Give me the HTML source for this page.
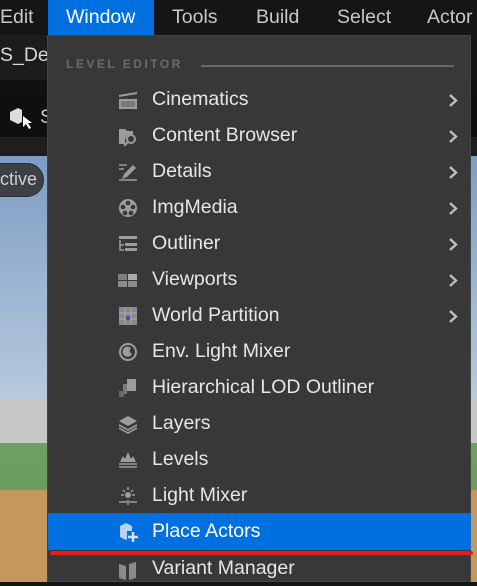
<!DOCTYPE html>
<html><head><style>
*{margin:0;padding:0;box-sizing:border-box}
body{width:477px;height:582px;overflow:hidden;position:relative;background:#151515;font-family:"Liberation Sans",sans-serif}
.abs{position:absolute}
.mb{top:0;left:0;width:477px;height:35px;background:#151515}
.mb span{position:absolute;top:6px;font-size:19.5px;color:#c8c8c8}
.menu{left:47px;top:35px;width:424px;height:547px;background:#383838;border:1px solid #454545}
.item{position:absolute;left:0;width:422px;height:36px}
.item .t{position:absolute;left:104px;top:6px;font-size:19.5px;color:#e6e6e6}
.item .ic{position:absolute;left:70px;top:8px;width:20px;height:20px}
.item .ar{position:absolute;left:399px;top:11px;width:12px;height:15px}
</style></head><body>
<div class="abs" style="left:0;top:156px;width:477px;height:426px;background:linear-gradient(#7d9dc5,#b6c9dc 240px,#b9cbdc 244px,#c7c7c8 244px,#c7c7c8 287px,#6ea062 287px,#6a9c5e 334px,#c3985a 334px)"></div>
<div class="abs" style="left:0;top:35px;width:47px;height:45px;background:#1c1c1c"></div>
<div class="abs" style="left:0;top:44px;font-size:19.5px;color:#d8d8d8">S_Der</div>
<div class="abs" style="left:0;top:80px;width:477px;height:17px;background:#111"></div>
<div class="abs" style="left:0;top:97px;width:477px;height:40px;background:#0f0f0f"></div>
<svg class="abs" style="left:8px;top:104px" width="24" height="26"><path d="M2 8 L10 4 L14 6 L14 18 L10 20 L2 16Z" fill="#ddd"/><path d="M15 12 L15 23 L18 20 L21 25 L23 24 L20 19 L24 19Z" fill="#fff"/></svg>
<div class="abs" style="left:40px;top:106px;font-size:19.5px;color:#ccc">S</div>
<div class="abs" style="left:0;top:137px;width:477px;height:19px;background:#1e1e1e"></div>
<div class="abs" style="left:-20px;top:163px;width:64px;height:34px;border-radius:17px;background:#3d4147;border:1px solid #2a2c30"></div>
<div class="abs" style="left:0;top:169px;font-size:18px;color:#cfcfcf">ctive</div>
<div class="abs mb">
<span style="left:0">Edit</span>
<div class="abs" style="left:48px;top:0;width:106px;height:35px;background:#0070e0"></div>
<span style="left:66px;color:#fff">Window</span>
<span style="left:172px">Tools</span>
<span style="left:256px">Build</span>
<span style="left:337px">Select</span>
<span style="left:427px">Actor</span>
</div>
<div class="abs menu">
<div class="abs" style="left:18px;top:21px;font-size:12px;font-weight:bold;letter-spacing:2.5px;color:#6b6b6b">LEVEL EDITOR</div>
<div class="abs" style="left:153px;top:29px;width:253px;height:2px;background:#6a6a6a"></div>

<div class="item" style="top:46px"><svg class="ic" viewBox="0 0 20 20"><path d="M1 5 L19 2 L19 4 L1 7Z M1 9 H19 V19 H1Z" fill="#9c9c9c"/><rect x="3" y="11" width="14" height="6" fill="#7a7a7a"/></svg><span class="t">Cinematics</span><svg class="ar" viewBox="0 0 12 15"><path d="M3 2 L9 7.5 L3 13" stroke="#bdbdbd" stroke-width="2.4" fill="none"/></svg></div>
<div class="item" style="top:82px"><svg class="ic" viewBox="0 0 20 20"><path d="M1 3 H7 L9 5 H15 V9 A6 6 0 0 0 8 18 H1Z" fill="#9c9c9c"/><circle cx="13" cy="13" r="4" fill="none" stroke="#9c9c9c" stroke-width="2"/><path d="M10 16 L6 20" stroke="#9c9c9c" stroke-width="2"/></svg><span class="t">Content Browser</span><svg class="ar" viewBox="0 0 12 15"><path d="M3 2 L9 7.5 L3 13" stroke="#bdbdbd" stroke-width="2.4" fill="none"/></svg></div>
<div class="item" style="top:118px"><svg class="ic" viewBox="0 0 20 20"><path d="M1 3 H9 M1 7 H6 M1 18 H19" stroke="#9c9c9c" stroke-width="1.5"/><path d="M4 17 L6 12 L15 3 L18 6 L9 15Z" fill="#9c9c9c"/></svg><span class="t">Details</span><svg class="ar" viewBox="0 0 12 15"><path d="M3 2 L9 7.5 L3 13" stroke="#bdbdbd" stroke-width="2.4" fill="none"/></svg></div>
<div class="item" style="top:154px"><svg class="ic" viewBox="0 0 20 20"><circle cx="10" cy="10" r="9" fill="#9c9c9c"/><circle cx="10" cy="5" r="2.3" fill="#383838"/><circle cx="5" cy="9" r="2.3" fill="#383838"/><circle cx="15" cy="9" r="2.3" fill="#383838"/><circle cx="7" cy="15" r="2.3" fill="#383838"/><circle cx="13" cy="15" r="2.3" fill="#383838"/></svg><span class="t">ImgMedia</span><svg class="ar" viewBox="0 0 12 15"><path d="M3 2 L9 7.5 L3 13" stroke="#bdbdbd" stroke-width="2.4" fill="none"/></svg></div>
<div class="item" style="top:190px"><svg class="ic" viewBox="0 0 20 20"><rect x="1" y="2" width="18" height="3" fill="#9c9c9c"/><path d="M2 6 V16 H6 M2 11 H6" stroke="#9c9c9c" stroke-width="1.5" fill="none"/><rect x="7" y="9" width="12" height="3" fill="#9c9c9c"/><rect x="7" y="14" width="12" height="3" fill="#9c9c9c"/></svg><span class="t">Outliner</span><svg class="ar" viewBox="0 0 12 15"><path d="M3 2 L9 7.5 L3 13" stroke="#bdbdbd" stroke-width="2.4" fill="none"/></svg></div>
<div class="item" style="top:226px"><svg class="ic" viewBox="0 0 20 20"><rect x="0" y="4" width="9" height="6" fill="#7e7e7e"/><rect x="10" y="4" width="9" height="6" fill="#aaa"/><rect x="0" y="11" width="9" height="6" fill="#8c8c8c"/><rect x="10" y="11" width="9" height="6" fill="#8c8c8c"/></svg><span class="t">Viewports</span><svg class="ar" viewBox="0 0 12 15"><path d="M3 2 L9 7.5 L3 13" stroke="#bdbdbd" stroke-width="2.4" fill="none"/></svg></div>
<div class="item" style="top:262px"><svg class="ic" viewBox="0 0 20 20"><rect x="1" y="1" width="18" height="18" fill="#8a8a8a"/><path d="M7 1V19M13 1V19M1 7H19M1 13H19" stroke="#a8a8a8" stroke-width="1"/><rect x="8" y="10" width="4" height="4" fill="#2a5aa8"/></svg><span class="t">World Partition</span><svg class="ar" viewBox="0 0 12 15"><path d="M3 2 L9 7.5 L3 13" stroke="#bdbdbd" stroke-width="2.4" fill="none"/></svg></div>
<div class="item" style="top:298px"><svg class="ic" viewBox="0 0 20 20"><circle cx="10" cy="10" r="8" fill="none" stroke="#9c9c9c" stroke-width="2"/><path d="M13 6 A5 5 0 1 0 14 12 A3.5 3.5 0 0 1 13 6Z" fill="#9c9c9c"/></svg><span class="t">Env. Light Mixer</span></div>
<div class="item" style="top:334px"><svg class="ic" viewBox="0 0 20 20"><rect x="9" y="1" width="9" height="12" fill="#9c9c9c"/><rect x="5" y="6" width="4" height="10" fill="#7a7a7a"/><rect x="1" y="13" width="5" height="6" fill="#6a6a6a"/></svg><span class="t">Hierarchical LOD Outliner</span></div>
<div class="item" style="top:370px"><svg class="ic" viewBox="0 0 20 20"><path d="M10 2 L19 7 L10 12 L1 7Z" fill="#9c9c9c"/><path d="M1 11 L10 16 L19 11 M1 14 L10 19 L19 14" stroke="#9c9c9c" stroke-width="1.6" fill="none"/></svg><span class="t">Layers</span></div>
<div class="item" style="top:406px"><svg class="ic" viewBox="0 0 20 20"><path d="M2 12 L5 6 L7 9 L10 2 L13 9 L15 6 L18 12Z" fill="#9c9c9c"/><path d="M1 14 H19 M1 17 H19" stroke="#9c9c9c" stroke-width="1.6"/></svg><span class="t">Levels</span></div>
<div class="item" style="top:442px"><svg class="ic" viewBox="0 0 20 20"><circle cx="10" cy="9" r="3" fill="#9c9c9c"/><path d="M10 1V4M3 9H6M14 9H17M5 4L7 6M15 4L13 6M1 16H9M11 16H19M10 14V19" stroke="#9c9c9c" stroke-width="1.5"/></svg><span class="t">Light Mixer</span></div>
<div class="item" style="top:477px;left:0;width:423px;height:37px;background:#0070e0"><svg class="ic" viewBox="0 0 20 20" style="top:9px"><path d="M2 4 L8 1 L14 4 L14 9 L9 9 L9 17 L8 18 L2 15Z" fill="#b8d4f5"/><path d="M15 10V20M10 15H20" stroke="#d0e4fa" stroke-width="2.4"/></svg><span class="t" style="color:#fff;top:7px">Place Actors</span></div>
<div class="abs" style="left:2px;top:515px;width:423px;height:4px;background:#e01e1e;border-radius:2px"></div>
<div class="item" style="top:514px"><svg class="ic" viewBox="0 0 20 20" style="top:10px"><path d="M1 4 L8 6 V20 L1 18Z M11 4 L18 2 V18 L11 20Z" fill="#8a8a8a"/></svg><span class="t" style="top:7px">Variant Manager</span></div>
</div>
</body></html>
